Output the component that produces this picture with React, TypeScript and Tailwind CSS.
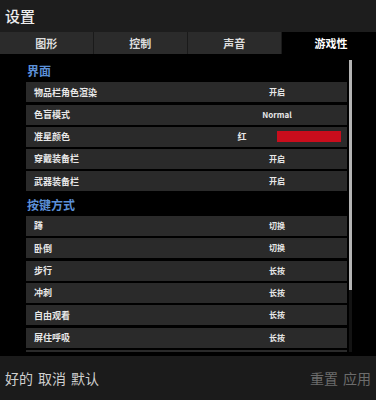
import React from 'react';

const FONT = { fontFamily: '"Noto Sans CJK SC", "Noto Sans", sans-serif' };

type Row = { label: string; value: string; color?: string };

const UI_ROWS: Row[] = [
  { label: '物品栏角色渲染', value: '开启' },
  { label: '色盲模式', value: 'Normal' },
  { label: '准星颜色', value: '红', color: '#c90d1c' },
  { label: '穿戴装备栏', value: '开启' },
  { label: '武器装备栏', value: '开启' },
];

const KEY_ROWS: Row[] = [
  { label: '蹲', value: '切换' },
  { label: '卧倒', value: '切换' },
  { label: '步行', value: '长按' },
  { label: '冲刺', value: '长按' },
  { label: '自由观看', value: '长按' },
  { label: '屏住呼吸', value: '长按' },
];

const TABS = ['图形', '控制', '声音', '游戏性'];

function SettingRow({ row }: { row: Row }) {
  return (
    <div className="mb-[2.3px] flex h-[20px] items-center bg-[#2a2a2a]">
      <span className="flex-1 pl-[8px] text-[9px] font-bold text-[#e8e8e8]">{row.label}</span>
      {row.color ? (
        <div className="grid w-[140px] grid-cols-2 items-center">
          <span className="text-center text-[9px] font-bold text-[#e8e8e8]">{row.value}</span>
          <div className="h-[11px] w-[64px]" style={{ backgroundColor: row.color }} />
        </div>
      ) : (
        <span className="w-[140px] text-center text-[8px] font-bold text-[#e8e8e8]">{row.value}</span>
      )}
    </div>
  );
}

export default function App() {
  return (
    <div className="flex h-[400px] w-[376px] flex-col overflow-hidden bg-black" style={FONT}>
      {/* Header */}
      <div className="flex h-[32px] items-center bg-[#1d1d1d] pl-[5px]">
        <span className="text-[15px] font-medium text-[#eeeeee]">设置</span>
      </div>

      {/* Tabs */}
      <div className="grid h-[22px] grid-cols-4 bg-[#1a1a1a]">
        {TABS.map((t, i) => (
          <div
            key={t}
            className={`flex items-center justify-center text-[11px] font-bold ${
              i === 3
                ? 'bg-black pl-[4px] text-white'
                : 'mr-[1.5px] bg-[#2b2b2b] text-[#dddddd]'
            }`}
          >
            {t}
          </div>
        ))}
      </div>

      {/* Content */}
      <div className="flex h-[298px] overflow-hidden pl-[26px] pt-[6px]">
        <div className="w-[321px]">
          <div className="flex h-[22.3px] items-center pl-[1px] text-[12px] font-bold text-[#5b8fd6]">
            界面
          </div>
          {UI_ROWS.map((r) => (
            <SettingRow key={r.label} row={r} />
          ))}
          <div className="flex h-[22.3px] items-center pl-[1px] text-[12px] font-bold text-[#5b8fd6]">
            按键方式
          </div>
          {KEY_ROWS.map((r) => (
            <SettingRow key={r.label} row={r} />
          ))}
          {/* next row, clipped by the list edge */}
          <div className="h-[20px] bg-[#2a2a2a]" />
        </div>
        <div className="ml-[2px] w-[3px] bg-[#131313]">
          <div className="h-[230px] bg-[#b4b4b4]" />
        </div>
      </div>

      <div className="h-[4px] bg-black" />

      {/* Footer */}
      <div className="flex flex-1 items-center justify-between bg-[#1b1b1b] px-[5px] text-[14px]">
        <div className="flex gap-[5px] text-[#cfcfcf]">
          <span>好的</span>
          <span>取消</span>
          <span>默认</span>
        </div>
        <div className="flex gap-[5px] text-[#6c6c6c]">
          <span>重置</span>
          <span>应用</span>
        </div>
      </div>
    </div>
  );
}
